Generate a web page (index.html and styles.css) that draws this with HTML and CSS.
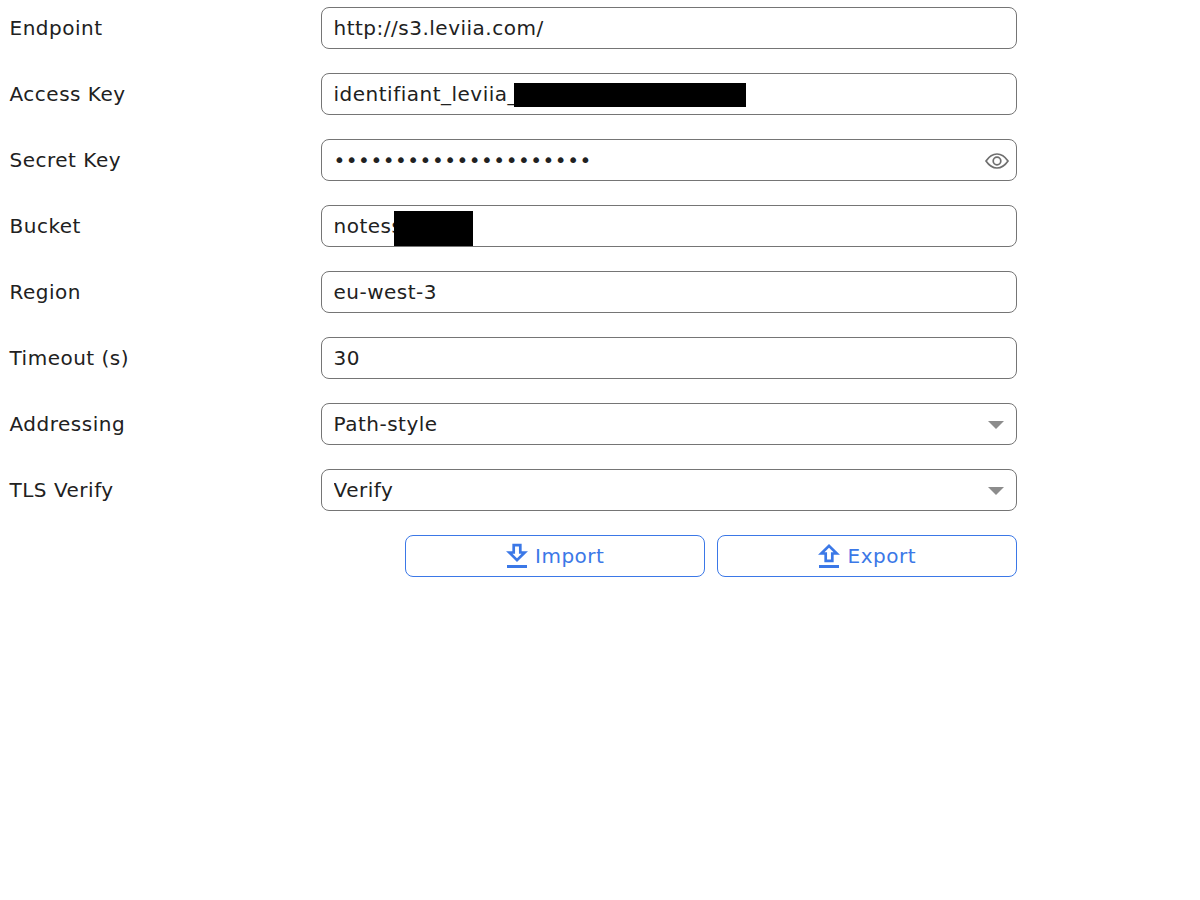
FILE: index.html
```html
<!DOCTYPE html>
<html lang="en">
<head>
  <meta charset="UTF-8" />
  <title>S3 Settings</title>
  <link rel="stylesheet" href="styles.css">
</head>
<body>
  <form class="settings-form">
    <label class="field-label">Endpoint</label>
    <div class="field"><input class="text-input" type="text" value="http://s3.leviia.com/"></div>

    <label class="field-label">Access Key</label>
    <div class="field">
      <input class="text-input" type="text" value="identifiant_leviia_">
      <span class="redact redact-key"></span>
    </div>

    <label class="field-label">Secret Key</label>
    <div class="field">
      <input class="text-input" type="password" value="aaaaaaaaaaaaaaaaaaaaa">
      <svg class="eye-icon" viewBox="0 0 24 16" width="24" height="16" fill="none" stroke="#6f6f6f" stroke-width="1.7">
        <path d="M1 8C4 3.600 7.800 1 12 1s8 2.600 11 7c-3 4.400-6.800 7-11 7S4 12.400 1 8z"/>
        <circle cx="12" cy="8" r="3.800"/>
      </svg>
    </div>

    <label class="field-label">Bucket</label>
    <div class="field">
      <input class="text-input" type="text" value="notess">
      <span class="redact redact-bucket"></span>
    </div>

    <label class="field-label">Region</label>
    <div class="field"><input class="text-input" type="text" value="eu-west-3"></div>

    <label class="field-label">Timeout (s)</label>
    <div class="field"><input class="text-input" type="text" value="30"></div>

    <label class="field-label">Addressing</label>
    <div class="field">
      <select class="text-input select-input"><option>Path-style</option></select>
      <span class="select-arrow"></span>
    </div>

    <label class="field-label">TLS Verify</label>
    <div class="field">
      <select class="text-input select-input"><option>Verify</option></select>
      <span class="select-arrow"></span>
    </div>

    <div class="button-row">
      <button class="action-button" type="button">
        <svg viewBox="0 0 22 26" width="22" height="26" fill="none" stroke="#3b78e7" stroke-width="2.700">
          <path d="M7.700 2.200h6.600v7.300h4.400L11 17.200 3.300 9.500h4.400z"/>
          <path d="M1 23.500h20" stroke-width="3"/>
        </svg>
        Import
      </button>
      <button class="action-button" type="button">
        <svg viewBox="0 0 22 26" width="22" height="26" fill="none" stroke="#3b78e7" stroke-width="2.700">
          <path d="M7.700 17.800h6.600v-7.300h4.400L11 2.800 3.300 10.500h4.400z"/>
          <path d="M1 23.500h20" stroke-width="3"/>
        </svg>
        Export
      </button>
    </div>
  </form>
</body>
</html>
```

FILE: styles.css
```css
html, body { margin: 0; background: #fff; }

body { font-family: 'DejaVu Sans', sans-serif; font-size: 20px; letter-spacing: 0.5px; color: #212121; }

.settings-form {
  width: 1008px;
  margin: 7px 0 0 9px;
  display: grid;
  grid-template-columns: 312px 696px;
  row-gap: 24px;
  align-items: center;
}

.field-label { line-height: 42px; height: 42px; margin-top: -1px; padding-left: 0.5px; }

.field { position: relative; height: 42px; }

.text-input {
  box-sizing: border-box;
  display: block;
  width: 100%;
  height: 42px;
  padding: 0 11.5px;
  border: 1px solid #757575;
  border-radius: 8px;
  background: #fff;
  color: #212121;
  font: inherit;
  letter-spacing: inherit;
  outline: none;
}

.select-input { appearance: none; -webkit-appearance: none; }

.select-arrow {
  position: absolute;
  top: 18px;
  right: 13px;
  border-left: 8px solid transparent;
  border-right: 8px solid transparent;
  border-top: 8px solid #8c8c8c;
}

.eye-icon { position: absolute; top: 14px; right: 8.500px; }

.redact { position: absolute; background: #000; }
.redact-key { left: 193px; top: 10px; width: 232px; height: 24px; }
.redact-bucket { left: 73px; top: 6px; width: 79px; height: 35px; }

.button-row {
  grid-column: 2;
  display: flex;
  justify-content: flex-end;
  gap: 12px;
}

.action-button {
  box-sizing: border-box;
  width: 300px;
  height: 42px;
  display: flex;
  align-items: center;
  justify-content: center;
  gap: 7.500px;
  border: 1px solid #3b78e7;
  border-radius: 8px;
  background: #fff;
  color: #3b78e7;
  font: inherit;
  letter-spacing: inherit;
}
```
